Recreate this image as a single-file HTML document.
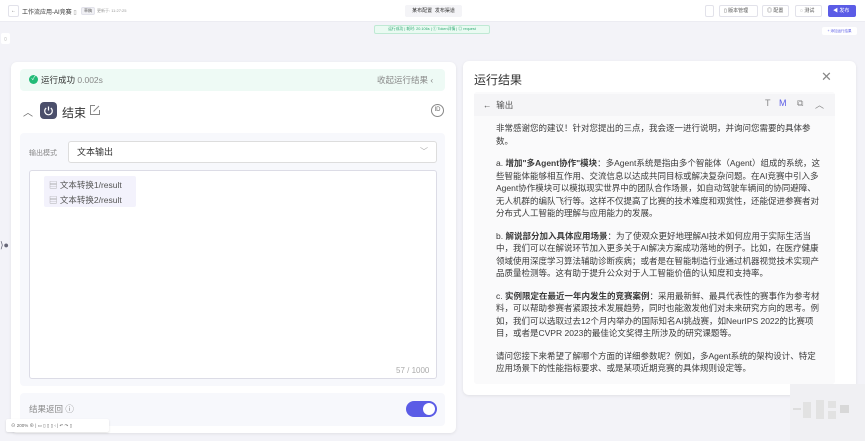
<!DOCTYPE html>
<html><head><meta charset="utf-8"><style>
*{margin:0;padding:0;box-sizing:border-box}
body{width:865px;height:441px;overflow:hidden;background:#f3f3f8;font-family:"Liberation Sans","Noto Sans CJK SC",sans-serif;position:relative;color:#333}
.a{position:absolute}
.top{left:0;top:0;width:865px;height:22px;background:#fff;border-bottom:1px solid #ececf2}
.btn{position:absolute;top:5px;height:12px;border:1px solid #e2e2ea;border-radius:2px;background:#fff;font-size:5px;color:#555;line-height:10px;padding:0 4px}
.rt p{white-space:nowrap;font-size:8.5px;line-height:12.5px;color:#3a3a3a}
.rt .g{height:10px}
</style></head><body>
<div class="a top">
 <div class="btn" style="left:8px;width:11px;padding:0;text-align:center">←</div>
 <div class="a" style="left:22px;top:7px;font-size:6px;color:#333">工作流应用-AI竞赛 <span style="color:#999">▯</span></div>
 <div class="btn" style="left:81px;top:7px;height:8px;line-height:6px;padding:0 2px;font-size:4px;background:#f0f0f4">草稿</div>
 <div class="a" style="left:97px;top:8px;font-size:4px;color:#999">更新于: 11:27:25</div>
 <div class="a" style="left:405px;top:5px;width:57px;height:12px;background:#f4f4f7;border-radius:2px;font-size:5px;line-height:12px;text-align:center;color:#333">某布配置 &nbsp;发布渠道</div>
 <div class="btn" style="left:705px;width:9px;padding:0"></div>
 <div class="btn" style="left:719px;width:39px">▯ 版本管理</div>
 <div class="btn" style="left:762px;width:27px">◎ 配置</div>
 <div class="btn" style="left:795px;width:27px">◌ 测试</div>
 <div class="btn" style="left:828px;width:28px;background:#5b5ce6;border-color:#5b5ce6;color:#fff">◀ 发布</div>
</div>
<div class="a" style="left:374px;top:25px;width:116px;height:9px;background:#eafaf2;border:1px solid #bfe9d4;border-radius:2px;font-size:3.8px;line-height:7px;color:#2da872;text-align:center">运行成功 | 耗时: 20.106s | ① Token详情 | ◎ request</div>
<div class="a" style="left:1px;top:33px;width:9px;height:11px;background:#fff;border-radius:2px;font-size:4px;text-align:center;line-height:11px;color:#888">▯</div>
<div class="a" style="left:822px;top:27px;width:35px;height:8px;background:#fff;border-radius:2px;font-size:3.5px;line-height:8px;color:#5b5ce6;text-align:center">+ 添加运行结果</div>

<div class="a" style="left:11px;top:62px;width:445px;height:371px;background:#fff;border-radius:6px;box-shadow:0 1px 3px rgba(0,0,0,.08)"></div>
<div class="a" style="left:20px;top:69px;width:425px;height:22px;background:#eefaf5;border-radius:4px"></div>
<div class="a" style="left:29px;top:75px;width:9px;height:9px;border-radius:50%;background:#22bb77;color:#fff;font-size:6px;line-height:9px;text-align:center">✓</div>
<div class="a" style="left:41px;top:74px;font-size:8.5px;color:#333">运行成功 <span style="color:#888">0.002s</span></div>
<div class="a" style="left:377px;top:74px;font-size:8.5px;color:#888">收起运行结果 ‹</div>
<div class="a" style="left:23px;top:104px;font-size:10px;color:#666">︿</div>
<div class="a" style="left:40px;top:102px;width:17px;height:17px;border-radius:4px;background:#4b4f6b"></div>
<svg class="a" style="left:43px;top:105px" width="11" height="11" viewBox="0 0 11 11"><path d="M3.2 3 A3.8 3.8 0 1 0 7.8 3" fill="none" stroke="#fff" stroke-width="1.2"/><path d="M5.5 1.5V5.5" stroke="#fff" stroke-width="1.2"/></svg>
<div class="a" style="left:62px;top:104px;font-size:12px;color:#333">结束</div>
<svg class="a" style="left:89px;top:104px" width="12" height="12" viewBox="0 0 12 12"><path d="M6 1.5H1.5V10.5H10.5V6M4.5 7.5L10 2" fill="none" stroke="#888" stroke-width="1"/></svg>
<div class="a" style="left:431px;top:104px;width:13px;height:13px;border:1px solid #888;border-radius:50%;font-size:6px;line-height:11px;text-align:center;color:#666">ID</div>
<div class="a" style="left:20px;top:133px;width:425px;height:253px;background:#f7f8fc;border-radius:4px"></div>
<div class="a" style="left:29px;top:148px;font-size:7px;color:#888">输出模式</div>
<div class="a" style="left:68px;top:141px;width:369px;height:22px;background:#fff;border:1px solid #ddd;border-radius:3px;font-size:9px;line-height:20px;padding-left:8px;color:#333">文本输出<span style="position:absolute;right:8px;color:#aaa;font-size:8px">﹀</span></div>
<div class="a" style="left:29px;top:170px;width:408px;height:209px;background:#fff;border:1px solid #dcdce6;border-radius:3px"></div>
<div class="a" style="left:44px;top:176px;width:92px;height:31px;background:#f3f2fc;border-radius:2px"></div>
<div class="a" style="left:49px;top:178px;font-size:8.5px;line-height:15px;color:#555"><span style="color:#999">▤</span> 文本转换1/result<br><span style="color:#999">▤</span> 文本转换2/result</div>
<div class="a" style="left:396px;top:366px;font-size:8px;color:#aaa">57 / 1000</div>
<div class="a" style="left:0;top:240px;font-size:9px;color:#667">⟩●</div>
<div class="a" style="left:20px;top:393px;width:425px;height:33px;background:#f7f8fc;border-radius:4px"></div>
<div class="a" style="left:29px;top:403px;font-size:8.5px;color:#888">结果返回 ⓘ</div>
<div class="a" style="left:406px;top:401px;width:31px;height:16px;border-radius:8px;background:#5b5ce6"></div>
<div class="a" style="left:423px;top:403px;width:12px;height:12px;border-radius:50%;background:#fff"></div>
<div class="a" style="left:6px;top:419px;width:103px;height:13px;background:#fff;border-radius:2px;box-shadow:0 1px 2px rgba(0,0,0,.12);font-size:4.5px;line-height:13px;color:#666;padding-left:5px;white-space:nowrap">⊖ 200% ⊕ | ▭ ▯ ▯ ▯ ‹ | ↶ ↷ ▯</div>

<div class="a" style="left:463px;top:61px;width:393px;height:334px;background:#fff;border-radius:6px;box-shadow:0 1px 3px rgba(0,0,0,.08)"></div>
<div class="a" style="left:474px;top:71px;font-size:12px;color:#333">运行结果</div>
<div class="a" style="left:821px;top:69px;font-size:13px;color:#888">✕</div>
<div class="a" style="left:474px;top:92px;width:361px;height:292px;background:#fafafb;border-radius:3px"></div>
<div class="a" style="left:474px;top:94px;width:361px;height:22px;background:#f5f5f7"></div>
<div class="a" style="left:483px;top:99px;font-size:8.5px;color:#555">←&nbsp; 输出</div>
<div class="a" style="left:765px;top:98px;font-size:9px;color:#888">T</div>
<div class="a" style="left:779px;top:98px;font-size:9px;color:#5b5ce6">M</div>
<div class="a" style="left:797px;top:98px;font-size:9px;color:#888">⧉</div>
<div class="a" style="left:815px;top:98px;font-size:9px;color:#888">︿</div>
<div class="a rt" style="left:496px;top:122px">
<p>非常感谢您的建议！针对您提出的三点，我会逐一进行说明，并询问您需要的具体参</p>
<p>数。</p><div class="g"></div>
<p>a. <b>增加"多Agent协作"模块</b>：多Agent系统是指由多个智能体（Agent）组成的系统，这</p>
<p>些智能体能够相互作用、交流信息以达成共同目标或解决复杂问题。在AI竞赛中引入多</p>
<p>Agent协作模块可以模拟现实世界中的团队合作场景，如自动驾驶车辆间的协同避障、</p>
<p>无人机群的编队飞行等。这样不仅提高了比赛的技术难度和观赏性，还能促进参赛者对</p>
<p>分布式人工智能的理解与应用能力的发展。</p><div class="g"></div>
<p>b. <b>解说部分加入具体应用场景</b>：为了使观众更好地理解AI技术如何应用于实际生活当</p>
<p>中，我们可以在解说环节加入更多关于AI解决方案成功落地的例子。比如，在医疗健康</p>
<p>领域使用深度学习算法辅助诊断疾病；或者是在智能制造行业通过机器视觉技术实现产</p>
<p>品质量检测等。这有助于提升公众对于人工智能价值的认知度和支持率。</p><div class="g"></div>
<p>c. <b>实例限定在最近一年内发生的竞赛案例</b>：采用最新鲜、最具代表性的赛事作为参考材</p>
<p>料，可以帮助参赛者紧跟技术发展趋势，同时也能激发他们对未来研究方向的思考。例</p>
<p>如，我们可以选取过去12个月内举办的国际知名AI挑战赛，如NeurIPS 2022的比赛项</p>
<p>目，或者是CVPR 2023的最佳论文奖得主所涉及的研究课题等。</p><div class="g"></div>
<p>请问您接下来希望了解哪个方面的详细参数呢？例如，多Agent系统的架构设计、特定</p>
<p>应用场景下的性能指标要求、或是某项近期竞赛的具体规则设定等。</p>
</div>
<div class="a" style="left:790px;top:384px;width:75px;height:57px;background:#f0f0f3"></div>
<div class="a" style="left:793px;top:408px;width:8px;height:2px;background:#ddd"></div>
<div class="a" style="left:803px;top:402px;width:8px;height:16px;background:#e2e2e2"></div>
<div class="a" style="left:816px;top:400px;width:8px;height:19px;background:#e2e2e2"></div>
<div class="a" style="left:828px;top:401px;width:8px;height:7px;background:#e2e2e2"></div>
<div class="a" style="left:828px;top:411px;width:8px;height:8px;background:#e2e2e2"></div>
<div class="a" style="left:840px;top:405px;width:9px;height:8px;background:#d8d8d8"></div>
</body></html>
